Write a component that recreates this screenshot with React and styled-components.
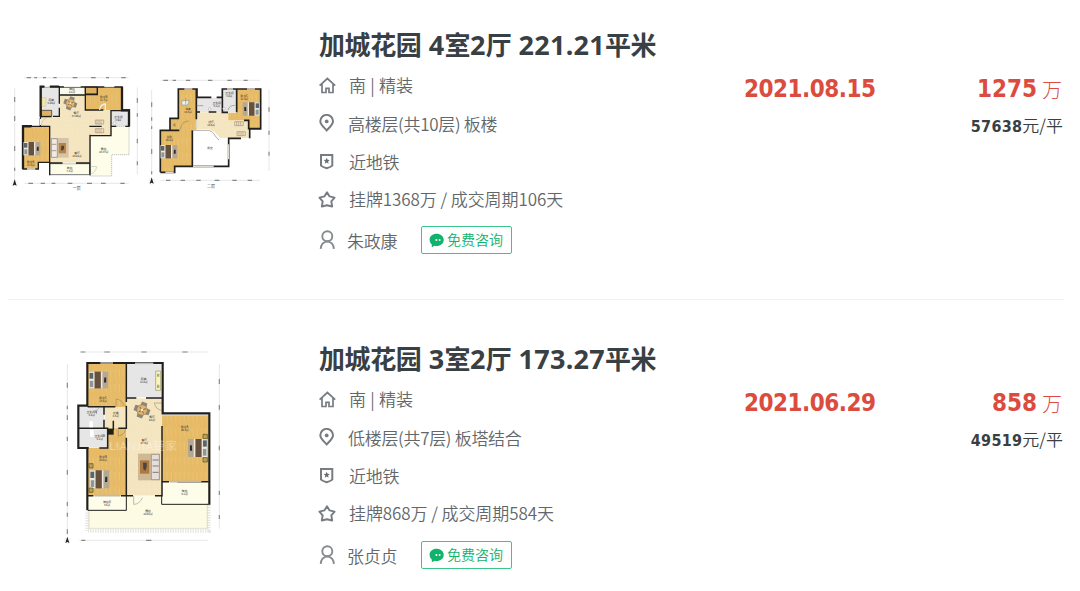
import React from "react";
import styled, { createGlobalStyle } from "styled-components";

const GlobalStyle = createGlobalStyle`
  *, *::before, *::after { box-sizing: border-box; }
  body {
    margin: 0;
    background: #fff;
    color: #62676b;
    font-family: "Noto Sans CJK SC", sans-serif;
    overflow: hidden;
  }
`;

const List = styled.main`
  width: 1080px;
  height: 591px;
  overflow: hidden;
  padding: 0 16px 0 8px;
`;

const Listing = styled.article`
  display: flex;
  height: ${(p) => (p.$first ? 300 : 314)}px;
  padding-top: ${(p) => (p.$first ? 27 : 41)}px;
  border-bottom: 1px solid #f0f0f0;
`;

const Thumb = styled.div`
  flex: 0 0 310px;
  padding-top: 38px;
  padding-left: ${(p) => p.$indent || 0}px;
  margin-top: ${(p) => p.$shift || 0}px;
  svg { display: block; }
`;

const Details = styled.div`
  flex: 0 0 426px;
`;

const Title = styled.h2`
  margin: 0 0 3px 1px;
  height: 37px;
  line-height: 34px;
  font-size: 26px;
  font-weight: 700;
  letter-spacing: -0.4px;
  color: #394043;
  white-space: pre;
`;

const TitleLatin = styled.span`
  font-family: "Noto Sans", sans-serif;
  font-size: 27px;
  letter-spacing: 0.25px;
`;

const InfoRow = styled.div`
  display: flex;
  align-items: center;
  height: ${(p) => p.$height || 38}px;
`;

const IconSlot = styled.span`
  flex: 0 0 ${(p) => p.$width || 31}px;
  height: 20px;
  svg { display: block; }
`;

const InfoText = styled.span`
  height: 24px;
  line-height: ${(p) => p.$line || 24}px;
  font-size: 17px;
  font-weight: 350;
  letter-spacing: ${(p) => p.$tracking || 0}px;
  white-space: nowrap;
`;

const ConsultButton = styled.button`
  display: flex;
  align-items: center;
  width: 91px;
  height: 28px;
  margin-left: 24px;
  padding: 0 0 0 7px;
  gap: 3px;
  border: 1px solid #3bc58a;
  border-radius: 2px;
  background: #fff;
  color: #11b26b;
  font: 350 14px/20px "Noto Sans CJK SC", sans-serif;
  white-space: nowrap;
  span { height: 20px; line-height: 18px; }
`;

const DealDate = styled.div`
  flex: 0 0 180px;
  padding-top: 47px;
  line-height: 30px;
  font-family: "DejaVu Sans Condensed", "DejaVu Sans", sans-serif;
  font-stretch: condensed;
  font-size: 24px;
  font-weight: 700;
  letter-spacing: -0.5px;
  color: #db4c3f;
`;

const Prices = styled.div`
  flex: 1;
  display: flex;
  flex-direction: column;
  align-items: flex-end;
  padding-top: 47px;
`;

const Total = styled.div`
  height: 30px;
  line-height: 32px;
  padding-right: 2px;
  font-size: 20px;
  font-weight: 300;
  color: #db4c3f;
  display: flex;
  gap: 5px;
  b { line-height: 30px; }
`;

const Figure = styled.b`
  font-family: "DejaVu Sans Condensed", "DejaVu Sans", sans-serif;
  font-stretch: condensed;
  font-size: ${(p) => p.$size}px;
  font-weight: 700;
  letter-spacing: ${(p) => p.$tracking || 0}px;
`;

const UnitPrice = styled.div`
  margin-top: 8px;
  padding-right: 1px;
  height: 26px;
  line-height: 26px;
  font-size: 17px;
  font-weight: 350;
  color: #394043;
`;

const stroke = { fill: "none", stroke: "#777c80", strokeWidth: 1.7 };

const HomeIcon = () => (
  <svg width="19" height="19" viewBox="0 0 19 19" {...stroke}>
    <path d="M1.6 9.6 9.4 2.500l7.800 7.100M4 8v8.500h3.500M11.500 16.500H15V8" />
    <path d="M8 17.300v-5h3v5" />
  </svg>
);
const PinIcon = () => (
  <svg width="19" height="19" viewBox="0 0 19 19" {...stroke} strokeWidth="2">
    <path d="M8.700 16.400C6 13.400 2.300 10.700 2.300 7.200a6.300 6.300 0 0 1 12.700 0c0 3.500-3.600 6.200-6.300 9.200Z" />
    <circle cx="8.700" cy="7.400" r="1.900" fill="#777c80" stroke="none" />
  </svg>
);
const BadgeIcon = () => (
  <svg width="19" height="19" viewBox="0 0 19 19" {...stroke} strokeWidth="2">
    <path d="M3 3h11.300v10.500q-1 1.400-5.600 2.700Q4 14.900 3 13.500Z" />
    <path d="m8.700 5.800.9 2 2.100.2-1.600 1.500.5 2.200-1.900-1.100-1.900 1.100.5-2.200-1.600-1.500 2.100-.2Z" fill="#696e72" stroke="none" />
  </svg>
);
const StarIcon = () => (
  <svg width="19" height="19" viewBox="0 0 19 19" {...stroke} strokeWidth="1.9" strokeLinejoin="round">
    <path d="m9 2.300 2.600 4.100 5 1.200-3.300 3.800.9 5.100L9 15.300l-5.200 1.200.9-5.100-3.300-3.800 5-1.200Z" />
  </svg>
);
const UserIcon = () => (
  <svg width="19" height="19" viewBox="0 0 19 19" {...stroke} stroke="#868b8e" strokeWidth="1.9">
    <circle cx="9.300" cy="6.200" r="5" />
    <path d="M2.700 18.900c.3-4.400 2.400-6.900 6.600-7.500 4.200.6 6.300 3.100 6.600 7.500" />
  </svg>
);
const ChatIcon = () => (
  <svg width="15" height="15" viewBox="0 0 15 15">
    <path d="M7.500.8C3.600.8.6 3.300.6 6.800c0 2 .9 3.500 2.200 4.600v2.800l2.800-1.500c4.800 1 9.100-1.700 9.100-5.800C14.700 3.300 11.400.8 7.500.8Z" fill="#11b26b" />
    <circle cx="7.400" cy="7" r="1" fill="#fff" />
    <circle cx="10.600" cy="7" r="1" fill="#fff" />
  </svg>
);

const WOOD = "#e7bc69";
const TILE = "#f5e6c2";
const WALL = "#211f1c";
const GREY = "#e6e6e7";
const TERRACE = "#fdfde9";

const Label = ({ x, y, name, area }) => (
  <text x={x} y={y} fontSize="8.5" fill="#3c362c" textAnchor="middle" fontFamily='"Noto Sans CJK SC", sans-serif' fontWeight="500">
    <tspan x={x}>{name}</tspan>
    <tspan x={x} dy="9" fontSize="7.5">{area}</tspan>
  </text>
);

const Bed = ({ x, y, flip }) => (
  <g transform={`translate(${x} ${y})${flip ? " translate(50 0) scale(-1 1)" : ""}`}>
    <rect width="50" height="40" fill="#b5a892" />
    <rect width="14" height="40" fill="#eee8dc" />
    <rect x="1" y="3" width="10" height="14" fill="#59656a" />
    <rect x="2" y="22" width="9" height="15" fill="#8b979b" />
    <rect x="15" width="16" height="40" fill="#66513f" />
    <rect x="31" width="4" height="40" fill="#eee8dc" />
    <path d="M40 14h5v12h-6z" fill="#2f2b28" />
  </g>
);

const Dining = ({ x, y }) => (
  <g transform={`translate(${x} ${y}) rotate(20)`}>
    <path d="M-7-20H7L8-11H-8ZM-7 20H7L8 11H-8ZM-20-7V7L-11 8V-8ZM20-7V7L11 8V-8Z" fill="#8b877f" />
    <circle r="13" fill="#ddb675" stroke="#9c7947" strokeWidth="1.5" />
    <path d="M-8-6 7 7M8-7-6 7" stroke="#936e43" strokeWidth="2.5" />
    <circle r="3" fill="#f7efd5" />
  </g>
);

const Compass = ({ x, y }) => (
  <g transform={`translate(${x} ${y})`}>
    <circle cy="3" r="9" fill="none" stroke="#d6d6d6" />
    <path d="M0-9-6 10 0 7 6 10Z" fill="#222" />
  </g>
);

const Scale = ({ d }) => <path d={d} fill="none" stroke="#cfcfcf" strokeWidth="1.5" />;
const Marks = ({ d }) => <path d={d} fill="none" stroke="#888" strokeWidth="3.5" />;

const Grain = ({ id }) => (
  <defs>
    <pattern id={id} width="13" height="44" patternUnits="userSpaceOnUse">
      <rect width="13" height="44" fill={WOOD} />
      <path d="M1 0v29M7 12v32" stroke="#dfb05b" strokeWidth="1" />
      <path d="M11 0v24" stroke="#ecc77c" strokeWidth="2" />
    </pattern>
    <pattern id={`${id}-tile`} width="17" height="17" patternUnits="userSpaceOnUse">
      <rect width="17" height="17" fill={TILE} />
      <path d="M0 0h17M0 0v17" stroke="#efdcb4" strokeWidth="1" />
    </pattern>
  </defs>
);

const DuplexPlan = () => (
  <svg width="277" height="135" viewBox="24 0 831 405">
    <Grain id="duplex" />
    <Scale d="M73 38H386M73 355H386M44 70V345M412 67V328" />
    <Marks d="M80 38h13m10 0h8m18 0h9m22 0h10m48 0h14m41 0h14m31 0h9m37 0h13M85 355h14m23 0h13m20 0h11m37 0h14m44 0h15m27 0h14m44 0h13M44 96v15m0 42v15m0 75v15m0 50v10M412 99v14m0 32v10m0 66v14m0 54v12" />
    <path d="M178 64H292V90H333V212H270V294H149V184H122V137H178Z" fill="url(#duplex-tile)" />
    <path d="M123 66H178V154H123Z" fill={GREY} />
    <path d="M178 66h78v22h-78Z" fill="#f8f9ef" />
    <path d="M256 66H366V135H256Z" fill="url(#duplex)" />
    <path d="M256 66h36v20h-36ZM124 136h31v18h-31Z" fill="#dfb062" stroke={WALL} strokeWidth="2" />
    <path d="M69 185H148V292H115V312H69Z" fill="url(#duplex)" />
    <path d="M333 137h53v47h-53Z" fill={GREY} />
    <path d="M271 212h62V184h54v85h-52v64h-64Z" fill={TERRACE} stroke="#aaa" strokeWidth="2" strokeDasharray="4 2" />
    <path d="M149 296H269V329H149Z" fill={TERRACE} stroke="#777" strokeWidth="3" />
    <path d="M122 158V65H178V90H256V66H366V135H388V184M178 66H292V89H256V135H310M122 155h32M178 88v28M178 128v26h-19M149 294V184H121V158M149 184H94V182H69V312H115V292H149M149 294H188M228 294H270V209M268 184H305M270 212H333V137H388M333 184H349M376 184H389M149 294V331M270 331V294" fill="none" stroke={WALL} strokeWidth="4" />
    <path d="M69 312V184H94M122 155V65H133M150 65H177M366 65V136H387V183" fill="none" stroke={WALL} strokeWidth="7" />
    <path d="M134 64h15M192 65h50M313 65h30M188 294h39M81 312h25M122 162v18M299 135c0-10 7-18 17-18v18" fill="none" stroke="#f4efe4" strokeWidth="4" />
    <path d="M124 182c0-12 8-23 21-25M271 327c12-2 18-14 19-22l-19-1" fill="none" stroke="#aaa" strokeWidth="1.5" />
    <Dining x={211} y={115} />
    <Bed x={71} y={231} />
    <rect x="153" y="219" width="53" height="59" fill="#d7c3a6" />
    <path d="M154 221h18v56h-18Z" fill="#eeeae4" stroke="#8c7f78" strokeWidth="2" />
    <path d="M155 238h14M155 257h14" stroke="#88766d" strokeWidth="2" />
    <rect x="176" y="234" width="22" height="31" fill="#b7854c" />
    <path d="M184 242h8v8l-4 7-5-2Z" fill="#4c433e" />
    <path d="M286 165h25v12h-25ZM286 191h25v12h-25ZM291 165v12m6-12v12m6-12v12m-12 14v12m6-12v12m6-12v12" fill="none" stroke="#a39480" strokeWidth="2" />
    <path d="M126 98h12v26h-12Z" fill="#efe7a9" stroke="#b2ad78" />
    <circle cx="344" cy="175" r="4" fill="#fff" stroke="#777" />
    <Label x={154} y={108} name="厨房" area="5.26㎡" />
    <Label x={216} y={75} name="阳台" area="2.1㎡" />
    <Label x={311} y={98} name="卧室B" area="11.7㎡" />
    <Label x={229} y={147} name="餐厅" area="37.66㎡" />
    <Label x={355} y={159} name="卫生间" area="3.9㎡" />
    <Label x={311} y={255} name="露台" area="23.37㎡" />
    <Label x={231} y={267} name="客厅" area="25.22㎡" />
    <Label x={92} y={293} name="卧室A" area="11.5㎡" />
    <Label x={209} y={311} name="阳台" area="7.3㎡" />
    <Compass x={44} y={352} />
    <text x="218" y="375" fontSize="12" fill="#333">一层</text>

    <g transform="translate(420 0)">
      <Scale d="M62 46H360M62 346H360M35 75V330M387 73V318" />
      <Marks d="M70 46h14m14 0h10m30 0h13m53 0h13m45 0h13m36 0h12M78 346h13m31 0h13m34 0h13m42 0h14m39 0h13m33 0h13M35 112v14m0 31v10m0 17v8m0 60v15m0 52v9M387 127v13m0 57v12m0 51v12" />
      <path d="M114 72H170V194H156V304H105V322H61V196H90V160H114Z" fill="url(#duplex)" />
      <path d="M171 142H266V166H326V219H240L223 200 205 192H171Z" fill="url(#duplex-tile)" />
      <path d="M171 98H243V141H171ZM247 73H290V142H247Z" fill={GREY} />
      <path d="M290 73H361V191H327V166H265V143H290Z" fill="url(#duplex)" />
      <path d="M158 199H200C224 199 222 215 237 226H264V303H158Z" fill="#fff" />
      <path d="M61 322V196H90V160H115V72H171V97H214M230 97H247V72H362V192H329V220M303 220H266V304H157V196M90 196H118M61 322H104V304H157M169 72V163M169 141H180M206 141H229M247 98V142H264M290 72V142M312 166H326V191H360M264 220H303" fill="none" stroke={WALL} strokeWidth="5" />
      <path d="M133 72h24M261 72h18M321 72h24M76 322h25M159 304h62M265 238v45M170 170v19" fill="none" stroke="#ddd9d2" strokeWidth="5" />
      <path d="M158 196H200C224 196 222 215 237 225M122 193c0-15 10-24 24-25M264 135c2-10 11-14 21-14M170 122h20" fill="none" stroke="#8d8579" strokeWidth="2" />
      <Bed x={62} y={240} />
      <Bed x={308} y={112} flip />
      <path d="M126 107h22l-5 13h-18ZM137 99v19" fill="#f4f2e8" stroke="#8b989a" strokeWidth="2" />
      <path d="M284 170h26v12h-26ZM291 200h25v12h-25ZM290 170v12m6-12v12m6-12v12m-5 18v12m6-12v12m6-12v12" fill="none" stroke="#a3947e" strokeWidth="2" />
      <circle cx="209" cy="132" r="4" fill="#fff" stroke="#777" />
      <circle cx="252" cy="131" r="4" fill="#fff" stroke="#777" />
      <Label x={144} y={134} name="书房" area="10.4㎡" />
      <Label x={230} y={117} name="卫生间" area="5.1㎡" />
      <Label x={268} y={86} name="卫生间" area="3.8㎡" />
      <Label x={313} y={95} name="卧室C" area="12.4㎡" />
      <Label x={213} y={173} name="过厅" area="18.6㎡" />
      <Label x={88} y={218} name="主卧" area="19.2㎡" />
      <text x="103" y="184" fontSize="8" fill="#4c453a" textAnchor="middle">柜</text>
      <text x="210" y="253" fontSize="8" fill="#4c453a" textAnchor="middle">挑空</text>
      <Compass x={35} y={346} />
      <text x="201" y="368" fontSize="12" fill="#333">二层</text>
    </g>
  </svg>
);

const FlatPlan = () => (
  <svg width="175" height="210" viewBox="0 0 525 630">
    <Grain id="flat" />
    <Scale d="M73 36H458M73 601H458M37 73V585M493 73V566" />
    <Marks d="M77 36h14m57 0h17m94 0h16m107 0h16M79 601h12m182 0h16M37 128v15m0 54v11m0 18v14m0 50v13m0 87v14m0 82v12m0 20v12m0 38v14M493 117v15m0 63v14m0 108v14m0 121v13m0 60v12" />
    <path d="M97 71H213V201H205V267H213V467H97V324H157V267H150V201H97Z" fill="url(#flat)" />
    <path d="M213 175H321V467H213ZM149 201H213V265H149Z" fill="url(#flat-tile)" />
    <path d="M216 73H319V172H216ZM72 200H147V263H72ZM72 268H157V323H72Z" fill={GREY} />
    <path d="M321 226H461V425H321Z" fill="url(#flat)" />
    <path d="M98 467H321V493H461V566H98Z" fill="#fdfbe4" />
    <path d="M101 469H213V511H101ZM322 427H460V492H322Z" fill={TERRACE} />
    <path d="M97 510V572H461V490" fill="none" stroke="#dededb" strokeWidth="12" strokeDasharray="2 3" />
    <path d="M102 510V565H457V490" fill="none" stroke="#c6c6c2" strokeWidth="1.5" />
    <path d="M97 510V324H70V197H97V69H323V220H463V494" fill="none" stroke={WALL} strokeWidth="6.5" />
    <path d="M214 70V186M214 197V265H190M214 293V467M98 200H181M147 201V224M147 239V263M70 265H158V324H133M70 324H101M175 242V269M98 467H115M198 467H234M300 467H321V258M214 174H244M273 174H321M321 425H342M367 425H461" fill="none" stroke={WALL} strokeWidth="4.5" />
    <path d="M98 511H214V467M320 467V493H461" fill="none" stroke={WALL} strokeWidth="3" />
    <path d="M158 266h18v18h-18Z" fill={WALL} />
    <path d="M136 69h38M240 70h55M118 467h78M345 425h94" stroke="#bbbab5" strokeWidth="5" />
    <path d="M183 198v-21c12 1 21 9 24 20M190 266v22c10-1 19-8 22-20M321 189h-23c2 12 10 20 23 23M236 468v25c12 0 21-8 26-20M137 201c-10 4-14 12-12 21" fill="none" stroke="#85796a" strokeWidth="1.5" />
    <g transform="translate(102 95) scale(1.15 1.25)"><Bed x={0} y={0} /></g>
    <g transform="translate(105 391) scale(1.15 1.35)"><Bed x={0} y={0} /></g>
    <g transform="translate(399 297) scale(1.15 1.35)"><Bed x={0} y={0} flip /></g>
    <g transform="translate(261 210) scale(1.2)"><Dining x={0} y={0} /></g>
    <rect x="249" y="341" width="66" height="80" fill="#cfb995" />
    <path d="M289 343h24v76h-24Z" fill="#e6deda" stroke="#8f7d74" strokeWidth="2" />
    <path d="M293 360h18M293 378h18M293 397h18" stroke="#84766e" strokeWidth="3" />
    <rect x="255" y="361" width="28" height="40" fill="#ad7943" />
    <path d="M264 368h11v12l-4 12-6-4Z" fill="#4c433e" />
    <path d="M302 93h15v58h-15Z" fill="#faf5ba" stroke="#999364" strokeWidth="2" />
    <path d="M306 101h7v9h-7ZM306 134h7v10h-7Z" fill="#ada980" />
    <path d="M102 371h12v13h-12ZM102 444h12v13h-12ZM444 283h13v13h-13ZM444 353h13v13h-13Z" fill="#bfa24c" stroke="#554b29" strokeWidth="2" />
    <path d="M103 244h11v18h-11ZM105 270h11v20h-11Z" fill="#fff" />
    <text x="163" y="331" fontSize="33" letterSpacing="2" fill="#fff" opacity=".35" fontFamily='Lato, "Noto Sans CJK SC", sans-serif'>LIANJIA链家</text>
    <Label x={144} y={176} name="卧室C" area="15.6㎡" />
    <Label x={266} y={121} name="厨房" area="11.0㎡" />
    <Label x={110} y={220} name="卫生间A" area="4.8㎡" />
    <Label x={182} y={223} name="过道" area="4.5㎡" />
    <Label x={291} y={234} name="餐厅" area="9.8㎡" />
    <Label x={134} y={292} name="卫生间B" area="5.1㎡" />
    <Label x={268} y={304} name="客厅" area="27.5㎡" />
    <Label x={389} y={264} name="卧室A" area="29.4㎡" />
    <Label x={144} y={354} name="卧室B" area="20.2㎡" />
    <Label x={156} y={488} name="阳台A" area="3.5㎡" />
    <Label x={389} y={457} name="阳台" area="6.1㎡" />
    <Label x={279} y={517} name="露台" area="28.65㎡" />
    <Compass x={37} y={599} />
  </svg>
);

const splitLatin = (text) =>
  text.split(/([ \d.]+)/).map((part, i) => (i % 2 ? <TitleLatin key={i}>{part}</TitleLatin> : part));

function House({ first, plan, indent, shift, home }) {
  return (
    <Listing $first={first}>
      <Thumb $indent={indent} $shift={shift}>{plan}</Thumb>
      <Details>
        <Title>{splitLatin(home.title)}</Title>
        <InfoRow><IconSlot><HomeIcon /></IconSlot><InfoText $line={22} $tracking={0.2}>南 | 精装</InfoText></InfoRow>
        <InfoRow><IconSlot $width={30}><PinIcon /></IconSlot><InfoText $line={23} $tracking={-0.3}>{home.floor}</InfoText></InfoRow>
        <InfoRow><IconSlot><BadgeIcon /></IconSlot><InfoText $tracking={-0.3}>近地铁</InfoText></InfoRow>
        <InfoRow $height={37}><IconSlot><StarIcon /></IconSlot><InfoText $line={22} $tracking={-0.08}>{home.deal}</InfoText></InfoRow>
        <InfoRow $height={first ? 44 : 46}>
          <IconSlot $width={29}><UserIcon /></IconSlot>
          <InfoText $line={26} $tracking={-0.3}>{home.agent}</InfoText>
          <ConsultButton><ChatIcon /><span>免费咨询</span></ConsultButton>
        </InfoRow>
      </Details>
      <DealDate>{home.date}</DealDate>
      <Prices>
        <Total><Figure $size={24}>{home.total}</Figure>万</Total>
        <UnitPrice><Figure $size={16} $tracking={0.3}>{home.unit}</Figure>元/平</UnitPrice>
      </Prices>
    </Listing>
  );
}

export default function App() {
  return (
    <>
      <GlobalStyle />
      <List>
        <House
          first
          plan={<DuplexPlan />}
          home={{
            title: "加城花园 4室2厅 221.21平米",
            floor: "高楼层(共10层) 板楼",
            deal: "挂牌1368万 / 成交周期106天",
            agent: "朱政康",
            date: "2021.08.15",
            total: "1275",
            unit: "57638",
          }}
        />
        <House
          plan={<FlatPlan />}
          indent={47}
          shift={-39}
          home={{
            title: "加城花园 3室2厅 173.27平米",
            floor: "低楼层(共7层) 板塔结合",
            deal: "挂牌868万 / 成交周期584天",
            agent: "张贞贞",
            date: "2021.06.29",
            total: "858",
            unit: "49519",
          }}
        />
      </List>
    </>
  );
}
